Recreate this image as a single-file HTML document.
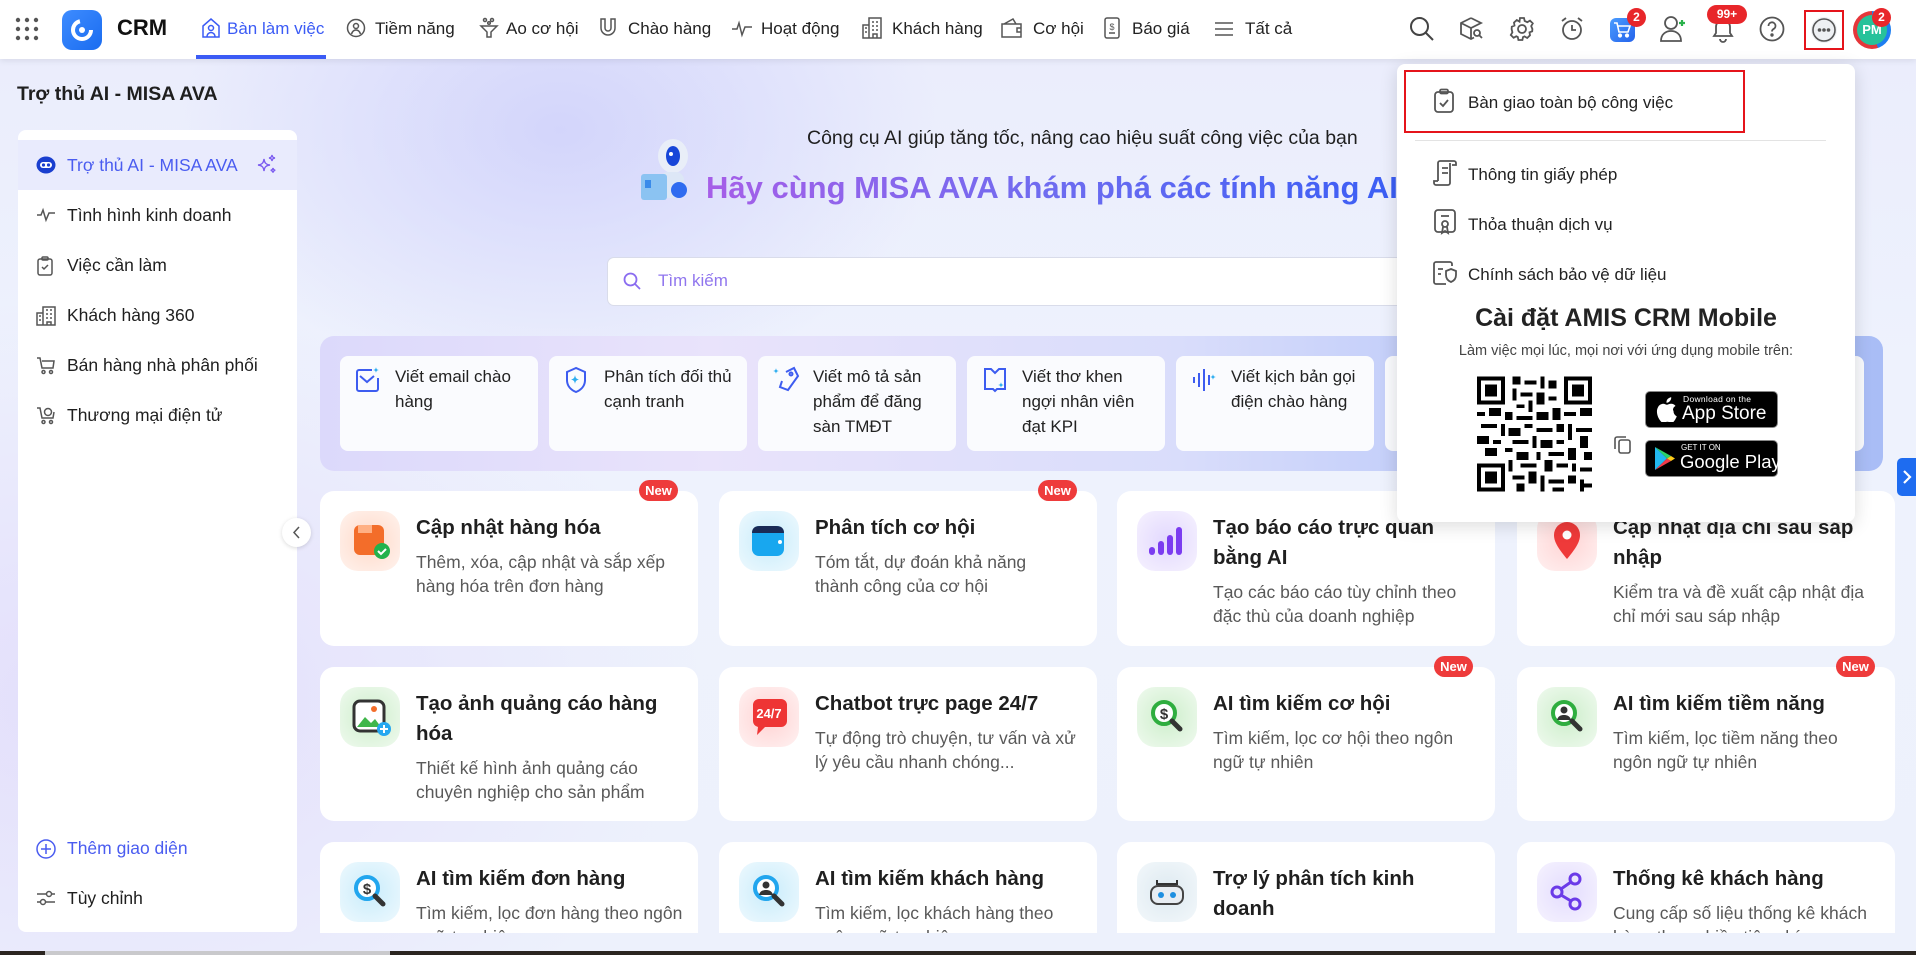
<!DOCTYPE html>
<html><head><meta charset="utf-8">
<style>
*{box-sizing:border-box;margin:0;padding:0}
body{width:1916px;height:955px;overflow:hidden;font-family:"Liberation Sans","Noto Sans CJK SC",sans-serif;color:#1f1f1f;position:relative;
background:radial-gradient(ellipse 380px 260px at 560px 130px,#d3d5fb 0%,rgba(220,222,252,0) 100%),radial-gradient(ellipse 600px 400px at 100px 700px,#e3defb 0%,rgba(230,230,252,0) 100%),linear-gradient(180deg,#eaecfc 0%,#eef2fd 40%,#edf1fc 100%);}
.nav{position:absolute;left:0;top:0;width:1916px;height:59px;background:#fff;box-shadow:0 2px 6px rgba(0,0,0,.08);z-index:5}
.nav .it{position:absolute;top:19px;font-size:17px;color:#222;white-space:nowrap}
.nav svg{position:absolute}
.ico{stroke:#555;fill:none;stroke-width:1.5}
.badge{position:absolute;background:#e8262a;color:#fff;font-size:12px;font-weight:bold;border-radius:10px;text-align:center;line-height:18px;height:18px}
.side{position:absolute;left:18px;top:130px;width:279px;height:802px;background:#fff;border-radius:8px}
.side .row{position:absolute;left:0;width:279px;height:50px;font-size:17.5px;color:#1f1f1f;line-height:50px;padding-left:49px}
.side svg{position:absolute;left:18px;top:16px}
.card{position:absolute;width:378px;background:#fff;border-radius:14px;overflow:hidden}
.card .ic{position:absolute;left:20px;top:20px;width:60px;height:60px;border-radius:18px}
.card h3{position:absolute;left:96px;top:22px;right:28px;font-size:20.5px;font-weight:bold;line-height:30px;color:#1f1f1f}
.card p{position:absolute;left:96px;right:14px;font-size:17.5px;line-height:24px;color:#595959}
.new{position:absolute;width:39px;height:21px;background:#ee3b3b;color:#fff;border-radius:11px;font-size:13px;font-weight:bold;text-align:center;line-height:21px;z-index:2}
.sg{position:absolute;top:356px;height:95px;width:198px;background:#fafbfe;border-radius:8px;font-size:17px;line-height:25px;color:#222;padding:8px 8px 0 55px}
.sg svg{position:absolute;left:14px;top:10px}
.dd{position:absolute;left:1397px;top:64px;width:458px;height:458px;background:#fff;border-radius:8px;box-shadow:0 4px 18px rgba(0,0,0,.14);z-index:10}
.dd .mi{position:absolute;left:71px;font-size:17px;color:#222}
.dd svg{position:absolute}
</style></head><body>

<div class="nav">
  <svg style="left:15px;top:17px" width="24" height="24" viewBox="0 0 24 24" fill="#555"><circle cx="3" cy="3" r="2.2"/><circle cx="12" cy="3" r="2.2"/><circle cx="21" cy="3" r="2.2"/><circle cx="3" cy="12" r="2.2"/><circle cx="12" cy="12" r="2.2"/><circle cx="21" cy="12" r="2.2"/><circle cx="3" cy="21" r="2.2"/><circle cx="12" cy="21" r="2.2"/><circle cx="21" cy="21" r="2.2"/></svg>
  <div style="position:absolute;left:62px;top:10px;width:40px;height:40px;border-radius:10px;background:linear-gradient(135deg,#3e8cff,#1a6cf0)"></div>
  <svg style="left:66px;top:14px" width="32" height="32" viewBox="0 0 32 32"><circle cx="16" cy="16" r="9" fill="none" stroke="#fff" stroke-width="4" stroke-dasharray="40 17"/><circle cx="16" cy="16" r="3" fill="#fff"/></svg>
  <div class="it" style="left:117px;top:15px;font-size:22px;font-weight:bold;color:#111">CRM</div>

  <svg style="left:200px;top:17px" width="22" height="22" viewBox="0 0 22 22" fill="none" stroke="#3b5bf5" stroke-width="1.5"><path d="M3 9 11 2l8 7v11H3z"/><circle cx="11" cy="11" r="2.5"/><path d="M7 20c0-3 2-4.5 4-4.5s4 1.5 4 4.5"/></svg>
  <div class="it" style="left:227px;color:#3b5bf5">Bàn làm việc</div>
  <div style="position:absolute;left:196px;top:55px;width:130px;height:4px;background:#3b5bf5"></div>

  <svg style="left:346px;top:18px" width="20" height="20" viewBox="0 0 20 20" class="ico"><circle cx="10" cy="10" r="8.5"/><circle cx="10" cy="8" r="2.5"/><path d="M5.5 16c1-3 2.5-4 4.5-4s3.5 1 4.5 4"/></svg>
  <div class="it" style="left:375px">Tiềm năng</div>
  <svg style="left:479px;top:17px" width="20" height="22" viewBox="0 0 20 22" class="ico"><circle cx="6" cy="3" r="1.5"/><circle cx="13" cy="3" r="1.5"/><circle cx="10" cy="6" r="1.3"/><path d="M2 9h16l-6 6v5H8v-5z"/></svg>
  <div class="it" style="left:506px">Ao cơ hội</div>
  <svg style="left:598px;top:17px" width="20" height="22" viewBox="0 0 20 22" class="ico"><path d="M3 2v9a7 7 0 0 0 14 0V2h-4v9a3 3 0 0 1-6 0V2z"/></svg>
  <div class="it" style="left:628px">Chào hàng</div>
  <svg style="left:731px;top:19px" width="22" height="20" viewBox="0 0 22 20" class="ico"><path d="M1 10h5l2-6 3 12 3-8h7"/></svg>
  <div class="it" style="left:761px">Hoạt động</div>
  <svg style="left:862px;top:17px" width="20" height="22" viewBox="0 0 20 22" class="ico"><path d="M1 21V8h6V1h12v20zM7 21V8M3 11h2M3 15h2M10 5h2M14 5h2M10 9h2M14 9h2M10 13h2M14 13h2M11 21v-4h4v4"/></svg>
  <div class="it" style="left:892px">Khách hàng</div>
  <svg style="left:1001px;top:18px" width="22" height="20" viewBox="0 0 22 20" class="ico"><path d="M1 6h19v13H1zM3 6l9-5 3 5M20 10h-4v4h4"/></svg>
  <div class="it" style="left:1033px">Cơ hội</div>
  <svg style="left:1104px;top:17px" width="16" height="22" viewBox="0 0 16 22" class="ico"><rect x="1" y="1" width="14" height="20" rx="2"/><text x="8" y="13" font-size="9" text-anchor="middle" fill="#555" stroke="none">$</text><path d="M5 16h6"/></svg>
  <div class="it" style="left:1132px">Báo giá</div>
  <svg style="left:1214px;top:21px" width="20" height="16" viewBox="0 0 20 16" class="ico"><path d="M1 2h18M1 8h18M1 14h18"/></svg>
  <div class="it" style="left:1245px">Tất cả</div>

  <svg style="left:1409px;top:16px" width="26" height="26" viewBox="0 0 26 26" fill="none" stroke="#444" stroke-width="2"><circle cx="10.5" cy="10.5" r="8.5"/><path d="M17 17l7 7"/></svg>
  <svg style="left:1459px;top:16px" width="26" height="26" viewBox="0 0 26 26" fill="none" stroke="#555" stroke-width="1.8"><path d="M12 2 2 7v11l10 5 3-1.5M2 7l10 5 10-5-10-5M12 12v11"/><circle cx="18" cy="17" r="3"/><path d="M20 19l3 3"/></svg>
  <svg style="left:1509px;top:16px" width="26" height="26" viewBox="0 0 26 26" fill="none" stroke="#555" stroke-width="1.8"><circle cx="13" cy="13" r="4"/><path d="M11 2h4l.7 3 2.6 1.2 2.7-1.6 2.8 2.8-1.6 2.7L23.4 13l-.2 2.3-2.7 1 .5 3-2.8 2.7-2.7-1.6-1.5.7-.6 2.9h-4l-.6-3-1.5-.7L4.6 21.8l-2.8-2.8 1.6-2.7L2.6 13l.2-2.3 2.7-1.1-.5-3L7.8 4l2.7 1.6z"/></svg>
  <svg style="left:1559px;top:16px" width="26" height="26" viewBox="0 0 26 26" fill="none" stroke="#555" stroke-width="1.8"><circle cx="13" cy="14" r="9"/><path d="M13 9v5h4M3 5l4-3M23 5l-4-3"/></svg>
  <div style="position:absolute;left:1610px;top:18px;width:25px;height:24px;border-radius:6px;background:linear-gradient(135deg,#4a9cff,#2563eb)"></div>
  <svg style="left:1613px;top:21px" width="19" height="18" viewBox="0 0 19 18" fill="none" stroke="#fff" stroke-width="1.6"><path d="M1 2h3l2 9h9l2-6H5"/><circle cx="7" cy="14.5" r="1.3" fill="#fff"/><circle cx="14" cy="14.5" r="1.3" fill="#fff"/></svg>
  <div class="badge" style="left:1627px;top:8px;width:19px;height:19px;border-radius:10px">2</div>
  <svg style="left:1659px;top:14px" width="30" height="30" viewBox="0 0 30 30" fill="none" stroke="#555" stroke-width="1.8"><circle cx="12" cy="9" r="6"/><path d="M2 27c0-7 5-10 10-10s10 3 10 10z"/><path d="M23 6v6M20 9h6" stroke="#2bb24c" stroke-width="2.2"/></svg>
  <svg style="left:1710px;top:16px" width="26" height="28" viewBox="0 0 26 28" fill="none" stroke="#555" stroke-width="1.8"><path d="M4 20h18l-2-3v-6a7 7 0 0 0-14 0v6zM10 23a3 3 0 0 0 6 0"/></svg>
  <div class="badge" style="left:1707px;top:5px;width:40px;border-radius:10px;height:19px;line-height:19px">99+</div>
  <svg style="left:1759px;top:16px" width="26" height="26" viewBox="0 0 26 26" fill="none" stroke="#555" stroke-width="1.8"><circle cx="13" cy="13" r="11.5"/><path d="M9.5 10a3.5 3.5 0 1 1 5 3c-1 .6-1.5 1.3-1.5 2.5"/><circle cx="13" cy="19" r=".8" fill="#555"/></svg>
  <div style="position:absolute;left:1804px;top:10px;width:40px;height:40px;border:2.5px solid #e5141b"></div>
  <div style="position:absolute;left:1811px;top:17px;width:26px;height:26px;border-radius:50%;background:#eef0f3"></div>
  <svg style="left:1811px;top:17px" width="26" height="26" viewBox="0 0 26 26" fill="none" stroke="#555" stroke-width="1.6"><circle cx="13" cy="13" r="11"/><circle cx="8.5" cy="13" r="1" fill="#555"/><circle cx="13" cy="13" r="1" fill="#555"/><circle cx="17.5" cy="13" r="1" fill="#555"/></svg>
  <div style="position:absolute;left:1853px;top:11px;width:38px;height:38px;border-radius:50%;background:conic-gradient(#1e7ef0 0 45%,#e5363a 45% 100%)"></div>
  <div style="position:absolute;left:1857px;top:15px;width:30px;height:30px;border-radius:50%;background:#27c29a;color:#fff;font-weight:bold;font-size:13px;text-align:center;line-height:30px">PM</div>
  <div class="badge" style="left:1872px;top:8px;width:19px;height:19px">2</div>
</div>

<div style="position:absolute;left:17px;top:83px;font-size:19.5px;font-weight:bold;color:#1f1f1f">Trợ thủ AI - MISA AVA</div>

<div class="side">
  <div class="row" style="top:10px;background:#e9ebfd;color:#4a5cf0">Trợ thủ AI - MISA AVA
    <svg style="left:18px;top:16px" width="20" height="18" viewBox="0 0 20 18"><ellipse cx="10" cy="9" rx="9.5" ry="8.5" fill="#1a3fcf"/><rect x="4" y="6" width="12" height="6" rx="3" fill="#fff"/><circle cx="7.5" cy="9" r="1.6" fill="#1a3fcf"/><circle cx="12.5" cy="9" r="1.6" fill="#1a3fcf"/></svg>
    <svg style="left:238px;top:14px" width="22" height="22" viewBox="0 0 22 22" fill="none" stroke="#7c5cf0" stroke-width="1.4"><path d="M8 5c.5 4 2 5.5 6 6-4 .5-5.5 2-6 6-.5-4-2-5.5-6-6 4-.5 5.5-2 6-6zM16 1c.3 2 1 2.7 3 3-2 .3-2.7 1-3 3-.3-2-1-2.7-3-3 2-.3 2.7-1 3-3zM17 14c.2 1.5.8 2 2.3 2.3-1.5.2-2 .8-2.3 2.3-.2-1.5-.8-2-2.3-2.3 1.5-.3 2.1-.8 2.3-2.3z"/></svg>
  </div>
  <div class="row" style="top:60px"><svg width="20" height="18" viewBox="0 0 20 18" class="ico"><path d="M1 9h4l2-5 3 10 3-7h6"/></svg>Tình hình kinh doanh</div>
  <div class="row" style="top:110px"><svg width="18" height="20" viewBox="0 0 18 20" class="ico"><rect x="2" y="3" width="14" height="16" rx="2"/><rect x="6" y="1" width="6" height="3" rx="1"/><path d="M6 11l2 2 4-4"/></svg>Việc cần làm</div>
  <div class="row" style="top:160px"><svg width="20" height="20" viewBox="0 0 20 20" class="ico"><path d="M1 19V7h6V1h12v18zM7 19V7M3 10h2M3 14h2M10 4h2M14 4h2M10 8h2M14 8h2M10 12h2M14 12h2M11 19v-3h4v3"/></svg>Khách hàng 360</div>
  <div class="row" style="top:210px"><svg width="20" height="20" viewBox="0 0 20 20" class="ico"><path d="M1 2h3l2 10h11l1-7H6"/><circle cx="7.5" cy="16" r="1.5"/><circle cx="15" cy="16" r="1.5"/></svg>Bán hàng nhà phân phối</div>
  <div class="row" style="top:260px"><svg width="20" height="20" viewBox="0 0 20 20" class="ico"><path d="M1 2h3l2 10h11l1-6"/><circle cx="12" cy="6" r="3.5"/><circle cx="7.5" cy="16" r="1.5"/><circle cx="15" cy="16" r="1.5"/></svg>Thương mại điện tử</div>
  <div class="row" style="top:693px;color:#4a5cf0"><svg width="20" height="20" viewBox="0 0 20 20" fill="none" stroke="#4a5cf0" stroke-width="1.5"><circle cx="10" cy="10" r="9"/><path d="M10 5v10M5 10h10"/></svg>Thêm giao diện</div>
  <div class="row" style="top:743px"><svg width="20" height="18" viewBox="0 0 20 18" class="ico"><path d="M1 5h18M1 13h18"/><circle cx="13" cy="5" r="2.5" fill="#fff"/><circle cx="7" cy="13" r="2.5" fill="#fff"/></svg>Tùy chỉnh</div>
</div>
<div style="position:absolute;left:282px;top:518px;width:29px;height:29px;border-radius:50%;background:#fff;box-shadow:0 1px 4px rgba(0,0,0,.15);z-index:3"></div>
<svg style="position:absolute;left:291px;top:526px;z-index:4" width="12" height="13" viewBox="0 0 12 13" fill="none" stroke="#555" stroke-width="1.5"><path d="M8 1 3 6.5 8 12"/></svg>

<!-- header -->
<svg style="position:absolute;left:635px;top:134px" width="64" height="70" viewBox="0 0 64 70"><ellipse cx="38" cy="22" rx="15" ry="17" fill="#e9eef8"/><ellipse cx="38" cy="22" rx="7" ry="10" fill="#1846d8"/><circle cx="36" cy="20" r="2" fill="#fff"/><rect x="25" y="38" width="24" height="26" rx="8" fill="#dde7f6"/><rect x="6" y="40" width="26" height="26" rx="3" fill="#8bc3f2"/><rect x="10" y="46" width="6" height="8" fill="#3a8bea"/><circle cx="44" cy="56" r="8" fill="#2f6bf0"/></svg>
<div style="position:absolute;left:807px;top:127px;font-size:19.5px;color:#1f1f1f;white-space:nowrap">Công cụ AI giúp tăng tốc, nâng cao hiệu suất công việc của bạn</div>
<div style="position:absolute;left:706px;top:170px;font-size:31px;font-weight:bold;white-space:nowrap;background:linear-gradient(90deg,#a65ee8,#6e6cf0 50%,#3a5ef5);-webkit-background-clip:text;background-clip:text;color:transparent">Hãy cùng MISA AVA khám phá các tính năng AI</div>

<div style="position:absolute;left:607px;top:257px;width:988px;height:49px;background:#fff;border:1px solid #d9dcea;border-radius:7px"></div>
<svg style="position:absolute;left:623px;top:272px" width="18" height="19" viewBox="0 0 18 19" fill="none" stroke="#8a6cf0" stroke-width="1.8"><circle cx="7.5" cy="7.5" r="6"/><path d="M12 12l5 5"/></svg>
<div style="position:absolute;left:658px;top:271px;font-size:17px;color:#9076ee">Tìm kiếm</div>

<div style="position:absolute;left:320px;top:336px;width:1563px;height:135px;border-radius:14px;background:linear-gradient(90deg,#dcd9fb 0%,#e9e3fb 25%,#d9ddfb 55%,#b5c5f8 80%,#a9bdf6 100%)"></div>
<div class="sg" style="left:340px"><svg width="28" height="28" viewBox="0 0 28 28" fill="none" stroke="#3d5cf0" stroke-width="2"><path d="M18 4H5a2 2 0 0 0-2 2v17a2 2 0 0 0 2 2h17a2 2 0 0 0 2-2V12"/><path d="M6 10l7 6 7-6"/><path d="M22 1c.3 2 1 2.7 3 3-2 .3-2.7 1-3 3-.3-2-1-2.7-3-3 2-.3 2.7-1 3-3z" fill="#2eaef0" stroke="none"/></svg>Viết email chào hàng</div>
<div class="sg" style="left:549px"><svg width="28" height="28" viewBox="0 0 28 28" fill="none" stroke="#3d5cf0" stroke-width="2"><path d="M13 2 4 6v8c0 6 4 10 9 12 5-2 9-6 9-12V6z"/><path d="M12 9c.5 3 1.5 4 4 4.5-2.5.5-3.5 1.5-4 4.5-.5-3-1.5-4-4-4.5 2.5-.5 3.5-1.5 4-4.5z" fill="#2eaef0" stroke="none"/></svg>Phân tích đối thủ cạnh tranh</div>
<div class="sg" style="left:758px"><svg width="28" height="28" viewBox="0 0 28 28" fill="none" stroke="#3d5cf0" stroke-width="2"><path d="M14 6l8-4 4 8-10 14-8-3 2-6"/><circle cx="19" cy="8" r="1.5"/><path d="M4 2c.3 2 1 2.7 3 3-2 .3-2.7 1-3 3-.3-2-1-2.7-3-3 2-.3 2.7-1 3-3z" fill="#2eaef0" stroke="none"/></svg>Viết mô tả sản phẩm để đăng sàn TMĐT</div>
<div class="sg" style="left:967px"><svg width="28" height="28" viewBox="0 0 28 28" fill="none" stroke="#3d5cf0" stroke-width="2"><path d="M4 3h6l4 4 4-4h6v20h-8l-2 2-2-2H4z"/><path d="M20 16c.3 2 1 2.7 3 3-2 .3-2.7 1-3 3-.3-2-1-2.7-3-3 2-.3 2.7-1 3-3z" fill="#2eaef0" stroke="none"/></svg>Viết thơ khen ngợi nhân viên đạt KPI</div>
<div class="sg" style="left:1176px"><svg width="28" height="28" viewBox="0 0 28 28" fill="none" stroke="#3d5cf0" stroke-width="2"><path d="M4 11v6M9 7v14M14 3v22M19 9v10"/><path d="M23 8c.3 2 1 2.7 3 3-2 .3-2.7 1-3 3-.3-2-1-2.7-3-3 2-.3 2.7-1 3-3z" fill="#2eaef0" stroke="none"/></svg>Viết kịch bản gọi điện chào hàng</div>
<div class="sg" style="left:1385px"></div>
<div class="sg" style="left:1594px;width:270px"></div>

<!-- cards -->
<div class="new" style="left:639px;top:480px">New</div>
<div class="card" style="left:320px;top:491px;height:155px"><div class="ic" style="background:radial-gradient(circle,#ffd9c8,#fff3ee)"><svg width="60" height="60" viewBox="0 0 60 60"><rect x="14" y="14" width="30" height="30" rx="6" fill="#f36d2a"/><path d="M18 14h14v8h-14z" fill="#ffb084"/><circle cx="42" cy="40" r="8" fill="#22b24c"/><path d="M38 40l3 3 5-5" stroke="#fff" stroke-width="2" fill="none"/></svg></div><h3>Cập nhật hàng hóa</h3><p style="top:59px">Thêm, xóa, cập nhật và sắp xếp hàng hóa trên đơn hàng</p></div>
<div class="new" style="left:1038px;top:480px">New</div>
<div class="card" style="left:719px;top:491px;height:155px"><div class="ic" style="background:radial-gradient(circle,#c8ecfb,#eef9fe)"><svg width="60" height="60" viewBox="0 0 60 60"><rect x="13" y="15" width="32" height="30" rx="7" fill="#18a7ef"/><path d="M13 22c0-5 3-7 8-7h16c5 0 8 2 8 7z" fill="#1a2a55"/><circle cx="41" cy="31" r="2" fill="#fff"/></svg></div><h3>Phân tích cơ hội</h3><p style="top:59px;right:40px">Tóm tắt, dự đoán khả năng thành công của cơ hội</p></div>
<div class="card" style="left:1117px;top:491px;height:155px"><div class="ic" style="background:radial-gradient(circle,#e2d8fd,#f6f2ff)"><svg width="60" height="60" viewBox="0 0 60 60" fill="#7b3cf0"><rect x="12" y="36" width="6" height="8" rx="3"/><rect x="21" y="30" width="6" height="14" rx="3"/><rect x="30" y="24" width="6" height="20" rx="3"/><rect x="39" y="16" width="6" height="28" rx="3"/></svg></div><h3>Tạo báo cáo trực quan bằng AI</h3><p style="top:89px">Tạo các báo cáo tùy chỉnh theo đặc thù của doanh nghiệp</p></div>
<div class="card" style="left:1517px;top:491px;height:155px"><div class="ic" style="background:radial-gradient(circle,#ffd4d4,#fff1f1)"><svg width="60" height="60" viewBox="0 0 60 60"><path d="M30 48C20 36 17 30 17 24a13 13 0 0 1 26 0c0 6-3 12-13 24z" fill="#ef3a3a"/><circle cx="30" cy="24" r="4.5" fill="#fff"/></svg></div><h3>Cập nhật địa chỉ sau sáp nhập</h3><p style="top:89px">Kiểm tra và đề xuất cập nhật địa chỉ mới sau sáp nhập</p></div>

<div class="card" style="left:320px;top:667px;height:154px"><div class="ic" style="background:radial-gradient(circle,#cdeecb,#f0faef)"><svg width="60" height="60" viewBox="0 0 60 60"><rect x="14" y="14" width="30" height="30" rx="6" fill="#fff" stroke="#333" stroke-width="3"/><path d="M17 40l8-10 6 6 4-4 6 8z" fill="#3fb64a"/><circle cx="34" cy="22" r="3" fill="#f36d2a"/><circle cx="44" cy="42" r="7" fill="#26a8f0"/><path d="M44 38v8M40 42h8" stroke="#fff" stroke-width="2"/></svg></div><h3>Tạo ảnh quảng cáo hàng hóa</h3><p style="top:89px">Thiết kế hình ảnh quảng cáo chuyên nghiệp cho sản phẩm</p></div>
<div class="card" style="left:719px;top:667px;height:154px"><div class="ic" style="background:radial-gradient(circle,#ffd2d2,#fff2f2)"><svg width="60" height="60" viewBox="0 0 60 60"><path d="M14 18a6 6 0 0 1 6-6h22a6 6 0 0 1 6 6v16a6 6 0 0 1-6 6H26l-8 8 1-8a6 6 0 0 1-5-6z" fill="#ee3535"/><text x="30" y="31" font-size="13" font-weight="bold" text-anchor="middle" fill="#fff" font-family="Liberation Sans">24/7</text></svg></div><h3>Chatbot trực page 24/7</h3><p style="top:59px">Tự động trò chuyện, tư vấn và xử lý yêu cầu nhanh chóng...</p></div>
<div class="new" style="left:1434px;top:656px">New</div>
<div class="card" style="left:1117px;top:667px;height:154px"><div class="ic" style="background:radial-gradient(circle,#cdeecb,#f0faef)"><svg width="60" height="60" viewBox="0 0 60 60"><circle cx="27" cy="26" r="11" fill="#fff" stroke="#2fae3f" stroke-width="4"/><text x="27" y="32" font-size="15" font-weight="bold" text-anchor="middle" fill="#333" font-family="Liberation Sans">$</text><path d="M35 34l8 8" stroke="#333" stroke-width="5" stroke-linecap="round"/></svg></div><h3>AI tìm kiếm cơ hội</h3><p style="top:59px">Tìm kiếm, lọc cơ hội theo ngôn ngữ tự nhiên</p></div>
<div class="new" style="left:1836px;top:656px">New</div>
<div class="card" style="left:1517px;top:667px;height:154px"><div class="ic" style="background:radial-gradient(circle,#cdeecb,#f0faef)"><svg width="60" height="60" viewBox="0 0 60 60"><circle cx="27" cy="26" r="11" fill="#fff" stroke="#2fae3f" stroke-width="4"/><circle cx="27" cy="23" r="3.5" fill="#333"/><path d="M20 33c1-4 4-5 7-5s6 1 7 5z" fill="#333"/><path d="M35 34l8 8" stroke="#333" stroke-width="5" stroke-linecap="round"/></svg></div><h3>AI tìm kiếm tiềm năng</h3><p style="top:59px">Tìm kiếm, lọc tiềm năng theo ngôn ngữ tự nhiên</p></div>

<div class="card" style="left:320px;top:842px;height:91px;border-radius:14px 14px 0 0"><div class="ic" style="background:radial-gradient(circle,#c9ecfb,#eef9fe)"><svg width="60" height="60" viewBox="0 0 60 60"><circle cx="27" cy="26" r="11" fill="#fff" stroke="#22a6ee" stroke-width="4"/><text x="27" y="32" font-size="15" font-weight="bold" text-anchor="middle" fill="#333" font-family="Liberation Sans">$</text><path d="M35 34l8 8" stroke="#333" stroke-width="5" stroke-linecap="round"/></svg></div><h3>AI tìm kiếm đơn hàng</h3><p style="top:59px">Tìm kiếm, lọc đơn hàng theo ngôn ngữ tự nhiên</p></div>
<div class="card" style="left:719px;top:842px;height:91px;border-radius:14px 14px 0 0"><div class="ic" style="background:radial-gradient(circle,#c9ecfb,#eef9fe)"><svg width="60" height="60" viewBox="0 0 60 60"><circle cx="27" cy="26" r="11" fill="#fff" stroke="#22a6ee" stroke-width="4"/><circle cx="27" cy="23" r="3.5" fill="#333"/><path d="M20 33c1-4 4-5 7-5s6 1 7 5z" fill="#333"/><path d="M35 34l8 8" stroke="#333" stroke-width="5" stroke-linecap="round"/></svg></div><h3>AI tìm kiếm khách hàng</h3><p style="top:59px">Tìm kiếm, lọc khách hàng theo ngôn ngữ tự nhiên</p></div>
<div class="card" style="left:1117px;top:842px;height:91px;border-radius:14px 14px 0 0"><div class="ic" style="background:radial-gradient(circle,#dde9f0,#f3f8fb)"><svg width="60" height="60" viewBox="0 0 60 60"><path d="M20 18v4h20v-4" stroke="#333" stroke-width="2" fill="none"/><rect x="14" y="24" width="32" height="18" rx="7" fill="#e8edf2" stroke="#444" stroke-width="2"/><circle cx="24" cy="33" r="3" fill="#1e8fe0"/><circle cx="36" cy="33" r="3" fill="#1e8fe0"/></svg></div><h3 style="right:60px">Trợ lý phân tích kinh doanh</h3><p style="top:89px">Phân tích dữ liệu kinh doanh</p></div>
<div class="card" style="left:1517px;top:842px;height:91px;border-radius:14px 14px 0 0"><div class="ic" style="background:radial-gradient(circle,#e3dcfd,#f6f3ff)"><svg width="60" height="60" viewBox="0 0 60 60" fill="none" stroke="#6b3ae8" stroke-width="3"><circle cx="38" cy="17" r="5"/><circle cx="20" cy="30" r="5"/><circle cx="38" cy="42" r="5"/><path d="M24 27l10-7M24 33l10 6"/></svg></div><h3>Thống kê khách hàng</h3><p style="top:59px">Cung cấp số liệu thống kê khách hàng theo nhiều tiêu chí</p></div>

<div style="position:absolute;left:1897px;top:458px;width:19px;height:38px;background:#1e6cf0;border-radius:5px 0 0 5px"></div>
<svg style="position:absolute;left:1902px;top:470px" width="10" height="14" viewBox="0 0 10 14" fill="none" stroke="#fff" stroke-width="2.2"><path d="M2 1l6 6-6 6"/></svg>

<div style="position:absolute;left:0;top:951px;width:1916px;height:4px;background:#2b2520"></div>
<div style="position:absolute;left:45px;top:951px;width:345px;height:4px;background:#c9c9cc"></div>

<!-- dropdown -->
<div class="dd">
  <div style="position:absolute;left:7px;top:6px;width:341px;height:63px;border:2.5px solid #e5141b"></div>
  <svg style="left:36px;top:24px" width="22" height="26" viewBox="0 0 22 26" fill="none" stroke="#555" stroke-width="1.8"><rect x="2" y="4" width="18" height="20" rx="3"/><rect x="7" y="1.5" width="8" height="4" rx="1.5"/><path d="M7 15l3 3 5-6"/></svg>
  <div class="mi" style="top:29px">Bàn giao toàn bộ công việc</div>
  <div style="position:absolute;left:18px;top:76px;width:411px;height:1px;background:#e3e3e3"></div>
  <svg style="left:35px;top:95px" width="26" height="28" viewBox="0 0 26 28" fill="none" stroke="#555" stroke-width="1.8"><path d="M6 22V4a2 2 0 0 1 2-2h14a2 2 0 0 1 2 2v2h-4M6 22H2v2a2 2 0 0 0 2 2h12a2 2 0 0 0 2-2V4M10 9h6M10 14h6"/></svg>
  <div class="mi" style="top:101px">Thông tin giấy phép</div>
  <svg style="left:36px;top:144px" width="24" height="28" viewBox="0 0 24 28" fill="none" stroke="#555" stroke-width="1.8"><rect x="2" y="2" width="20" height="22" rx="3"/><circle cx="12" cy="16" r="3"/><path d="M10 19l-1 6 3-2 3 2-1-6M8 8h8"/></svg>
  <div class="mi" style="top:151px">Thỏa thuận dịch vụ</div>
  <svg style="left:35px;top:196px" width="26" height="26" viewBox="0 0 26 26" fill="none" stroke="#555" stroke-width="1.8"><path d="M14 24H4a2 2 0 0 1-2-2V4a2 2 0 0 1 2-2h14a2 2 0 0 1 2 2v2M6 9h5M6 14h3"/><path d="M19 9l5 2v4c0 4-2.5 6-5 7-2.5-1-5-3-5-7v-4z"/></svg>
  <div class="mi" style="top:201px">Chính sách bảo vệ dữ liệu</div>
  <div style="position:absolute;left:0;width:458px;top:240px;text-align:center;font-size:25px;font-weight:bold;color:#222">Cài đặt AMIS CRM Mobile</div>
  <div style="position:absolute;left:0;width:458px;top:279px;text-align:center;font-size:14.5px;color:#444">Làm việc mọi lúc, mọi nơi với ứng dụng mobile trên:</div>
  <svg style="left:80px;top:312px" width="115" height="116" viewBox="0 0 29 29" shape-rendering="crispEdges">
    <rect width="29" height="29" fill="#fff"/>
    <g fill="#000"><path d="M0 0h7v7H0zM22 0h7v7h-7zM0 22h7v7H0z"/></g>
    <g fill="#fff"><path d="M1 1h5v5H1zM23 1h5v5h-5zM1 23h5v5H1z"/></g>
    <g fill="#000"><path d="M2 2h3v3H2zM24 2h3v3h-3zM2 24h3v3H2z"/>
    <path d="M9 0h2v2H9zM12 1h3v1h-3zM16 0h1v3h-1zM18 1h2v2h-2zM9 3h1v3H9zM11 4h3v1h-3zM15 4h2v3h-2zM18 5h2v1h-2zM10 7h2v1h-2zM13 6h1v3h-1zM0 9h2v1H0zM3 8h3v2H3zM7 9h2v2H7zM10 10h4v1h-4zM15 9h3v2h-3zM19 8h2v3h-2zM22 9h3v1h-3zM26 8h3v2h-3zM1 12h4v1H1zM6 12h1v3H6zM8 13h3v2H8zM12 12h2v1h-2zM15 13h4v1h-4zM20 12h2v2h-2zM23 12h1v4h-1zM25 13h4v1h-4zM0 15h3v2H0zM4 16h2v1H4zM9 16h4v1H9zM14 15h1v3h-1zM16 16h3v2h-3zM20 16h2v1h-2zM26 15h2v3h-2zM2 18h3v2H2zM7 18h2v1H7zM10 19h3v2h-3zM15 19h1v2h-1zM18 19h4v1h-4zM23 18h2v3h-2zM27 19h2v2h-2zM8 21h1v3H8zM11 22h4v1h-4zM17 21h2v3h-2zM20 22h3v1h-3zM24 22h1v2h-1zM26 23h3v1h-3zM9 25h3v1H9zM13 24h2v3h-2zM16 25h1v4h-1zM18 26h4v1h-4zM23 25h2v2h-2zM26 26h1v3h-1zM10 27h2v2h-2zM19 28h3v1h-3zM27 27h2v1h-2z"/></g>
  </svg>
  <svg style="left:217px;top:371px" width="17" height="19" viewBox="0 0 17 19" fill="none" stroke="#555" stroke-width="1.6"><rect x="5" y="5" width="11" height="13" rx="2"/><path d="M12 2H3a2 2 0 0 0-2 2v10"/></svg>
  <div style="position:absolute;left:248px;top:327px;width:133px;height:37px;background:#000;border-radius:5px;border:1px solid #888"></div>
  <svg style="left:258px;top:333px" width="22" height="25" viewBox="0 0 22 25" fill="#fff"><path d="M18 13c0-3 2.5-4 2.5-4-1.4-2-3.5-2.2-4.2-2.2-1.8-.2-3.5 1-4.4 1-.9 0-2.3-1-3.8-1C6.1 7 4 8.2 3 10.2c-2.2 3.8-.6 9.4 1.5 12.4 1 1.5 2.3 3.2 3.9 3.1 1.5-.1 2.1-1 4-1s2.4 1 4 1c1.7 0 2.7-1.5 3.7-3 1.2-1.7 1.6-3.3 1.7-3.4-.1 0-3.3-1.3-3.3-5.3zM15 4c.8-1 1.4-2.4 1.2-3.8-1.2.1-2.6.8-3.5 1.8-.8.9-1.4 2.3-1.2 3.7 1.3.1 2.7-.7 3.5-1.7z"/></svg>
  <div style="position:absolute;left:286px;top:330px;font-size:8.5px;color:#fff;letter-spacing:.3px">Download on the</div>
  <div style="position:absolute;left:285px;top:339px;font-size:19px;color:#fff">App Store</div>
  <div style="position:absolute;left:248px;top:376px;width:133px;height:37px;background:#000;border-radius:5px;border:1px solid #888"></div>
  <svg style="left:257px;top:382px" width="22" height="25" viewBox="0 0 22 25"><path d="M1 1l12 11.5L1 24z" fill="#22b8f0"/><path d="M1 1l16 9-4 2.5z" fill="#2bd36a"/><path d="M1 24l16-9-4-2.5z" fill="#ef3a4a"/><path d="M17 10l4 2.5-4 2.5-4-2.5z" fill="#ffcc1a"/></svg>
  <div style="position:absolute;left:284px;top:379px;font-size:8px;color:#fff">GET IT ON</div>
  <div style="position:absolute;left:283px;top:387px;font-size:18.5px;color:#fff">Google Play</div>
</div>
</body></html>
